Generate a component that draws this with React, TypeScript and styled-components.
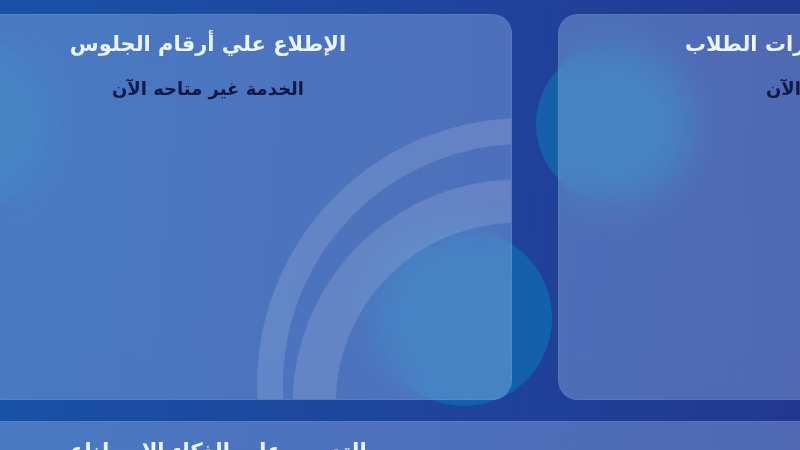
import React from "react";
import styled, { createGlobalStyle } from "styled-components";

const GlobalStyle = createGlobalStyle`
  * { box-sizing: border-box; }
  body { margin: 0; background: #1d459c; }
`;

const Page = styled.main`
  position: relative;
  height: 100vh;
  overflow: hidden;
  background: linear-gradient(95deg, #1852a6 0%, #1d489e 40%, #20429b 62%, #22388e 100%);
  font-family: "DejaVu Sans", sans-serif;
`;

const Glow = styled.div<{ $left: string; $top: number; $size: number }>`
  position: absolute;
  left: ${(p) => p.$left};
  top: ${(p) => p.$top}px;
  width: ${(p) => p.$size}px;
  height: ${(p) => p.$size}px;
  border-radius: 50%;
  background: #1460a9;
`;

const Services = styled.div`
  display: grid;
  grid-template-columns: 76% 76%;
  grid-auto-rows: minmax(386px, auto);
  gap: 21px 46px;
  margin-left: -12%;
  width: 100%;
  padding-top: 14px;
`;

const Card = styled.article<{ $wide?: boolean }>`
  position: relative;
  overflow: hidden;
  grid-column: ${(p) => (p.$wide ? "span 2" : "auto")};
  padding: 11px 24px;
  border: 1px solid rgba(170, 205, 255, 0.1);
  border-radius: 20px;
  background: rgba(176, 208, 255, 0.32);
  backdrop-filter: blur(20px);
  text-align: center;
`;

const CardText = styled.div<{ $half?: boolean }>`
  width: ${(p) => (p.$half ? "46%" : "auto")};
`;

const Title = styled.h2`
  margin: 0;
  color: #eaf6ff;
  font-size: 21px;
  font-weight: 700;
  line-height: 36px;
  white-space: nowrap;
`;

const Status = styled.p`
  margin: 12px 0 0;
  color: #101846;
  font-size: 18px;
  font-weight: 700;
  line-height: 30px;
`;

const Arcs = styled.svg`
  position: absolute;
  right: 0;
  bottom: 0;
  width: 259px;
  height: 289px;
`;

export default function App() {
  return (
    <Page>
      <GlobalStyle />
      <Glow $left="-14%" $top={40} $size={168} />
      <Glow $left="67%" $top={46} $size={156} />
      <Glow $left="47%" $top={230} $size={176} />
      <Services>
        <Card>
          <Arcs viewBox="0 0 259 289" fill="none" stroke="#ffffff" strokeOpacity="0.13" aria-hidden="true">
            <circle cx="272" cy="275" r="254" strokeWidth="26" />
            <circle cx="266" cy="295" r="204" strokeWidth="43" />
          </Arcs>
          <CardText dir="rtl" lang="ar">
            <Title>الإطلاع علي أرقام الجلوس</Title>
            <Status>الخدمة غير متاحه الآن</Status>
          </CardText>
        </Card>
        <Card>
          <CardText dir="rtl" lang="ar">
            <Title>الإطلاع علي نتائج إختبارات الطلاب</Title>
            <Status>الخدمة غير متاحه الآن</Status>
          </CardText>
        </Card>
        <Card $wide>
          <CardText $half dir="rtl" lang="ar">
            <Title>التدريب علي الذكاء الإصطناعي</Title>
          </CardText>
        </Card>
      </Services>
    </Page>
  );
}
